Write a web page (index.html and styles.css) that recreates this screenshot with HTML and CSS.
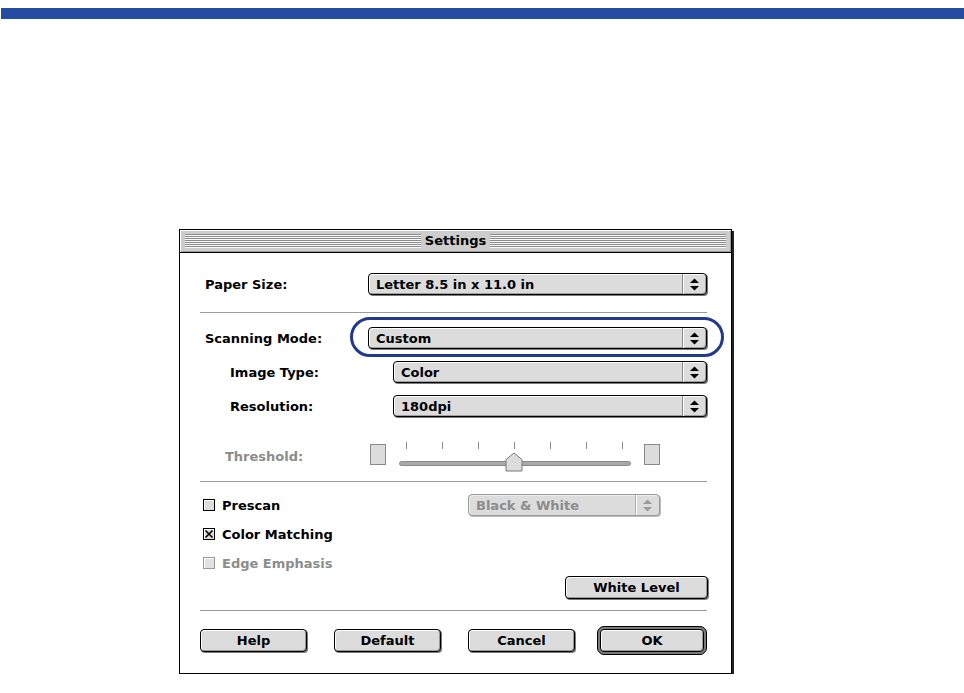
FILE: index.html
```html
<!DOCTYPE html>
<html lang="en">
<head>
    <meta charset="UTF-8">
    <title>Settings</title>
    <link rel="stylesheet" href="styles.css">
</head>
<body>
    <div class="topbar"></div>

    <div class="dialog">
        <div class="titlebar">
            <span class="grip"></span>
            <span class="title">Settings</span>
            <span class="grip"></span>
        </div>

        <div class="content">
            <div class="row">
                <span class="lbl">Paper Size:</span>
                <div class="popup">
                    <span class="value">Letter 8.5 in x 11.0 in</span>
                    <span class="arrows"><svg width="9" height="13" viewBox="0 0 9 13"><polygon points="0,5 4.5,0.5 9,5"/><polygon points="0,8 4.5,12.5 9,8"/></svg></span>
                </div>
            </div>

            <div class="sep"></div>

            <div class="row mode">
                <span class="lbl">Scanning Mode:</span>
                <div class="popup">
                    <span class="value">Custom</span>
                    <span class="arrows"><svg width="9" height="13" viewBox="0 0 9 13"><polygon points="0,5 4.5,0.5 9,5"/><polygon points="0,8 4.5,12.5 9,8"/></svg></span>
                    <span class="ring"></span>
                </div>
            </div>

            <div class="row sub">
                <span class="lbl">Image Type:</span>
                <div class="popup">
                    <span class="value">Color</span>
                    <span class="arrows"><svg width="9" height="13" viewBox="0 0 9 13"><polygon points="0,5 4.5,0.5 9,5"/><polygon points="0,8 4.5,12.5 9,8"/></svg></span>
                </div>
            </div>

            <div class="row sub">
                <span class="lbl">Resolution:</span>
                <div class="popup">
                    <span class="value">180dpi</span>
                    <span class="arrows"><svg width="9" height="13" viewBox="0 0 9 13"><polygon points="0,5 4.5,0.5 9,5"/><polygon points="0,8 4.5,12.5 9,8"/></svg></span>
                </div>
            </div>

            <div class="row thresh">
                <span class="lbl">Threshold:</span>
                <span class="sq"></span>
                <div class="track-area">
                    <div class="ticks">
                        <i></i><i></i><i></i><i></i><i></i><i></i><i></i>
                    </div>
                    <div class="track"></div>
                    <svg class="thumb" width="18" height="20" viewBox="0 0 18 20"><polygon points="1,19 1,7.5 9,1 17,7.5 17,19" fill="#dcdcdc" stroke="#7a7a7a" stroke-width="1"/></svg>
                </div>
                <span class="sq"></span>
            </div>

            <div class="sep sep2"></div>

            <div class="row check first">
                <span class="box"></span>
                <span class="clabel">Prescan</span>
                <div class="popup off bw">
                    <span class="value">Black &amp; White</span>
                    <span class="arrows"><svg width="9" height="13" viewBox="0 0 9 13"><polygon points="0,5 4.5,0.5 9,5"/><polygon points="0,8 4.5,12.5 9,8"/></svg></span>
                </div>
            </div>

            <div class="row check">
                <span class="box"><svg width="10" height="10" viewBox="0 0 10 10"><path d="M1.5 1.5 L8.5 8.5 M8.5 1.5 L1.5 8.5" stroke="#000" stroke-width="1.6"/></svg></span>
                <span class="clabel">Color Matching</span>
            </div>

            <div class="row check off">
                <span class="box"></span>
                <span class="clabel">Edge Emphasis</span>
            </div>

            <div class="row level">
                <span class="btn wide">White Level</span>
            </div>

            <div class="sep sep3"></div>

            <div class="buttons">
                <span class="btn">Help</span>
                <span class="btn">Default</span>
                <span class="btn">Cancel</span>
                <span class="default-ring"><span class="btn ok">OK</span></span>
            </div>
        </div>
    </div>
</body>
</html>
```

FILE: styles.css
```css
body {
    margin: 0;
    background: #fff;
    font-family: "DejaVu Sans", "Liberation Sans", sans-serif;
    font-weight: bold;
    font-size: 13px;
    color: #000;
}
.topbar {
    height: 11px;
    margin: 8px 0 0 1px;
    background-color: #244ca2;
}
.dialog {
    width: 553px;
    margin: 210px 0 0 179px;
    box-sizing: border-box;
    border: 1px solid #000;
    box-shadow: 2px 2px 0 #222;
    background: #fff;
}
.titlebar {
    height: 22px;
    display: flex;
    align-items: center;
    gap: 4px;
    padding: 0 5px 0 5px;
    background: #cdcdcd;
    border-bottom: 1px solid #000;
    box-shadow: inset 1px 1px 0 #fff, inset -1px -1px 0 #999;
}
.grip {
    flex: 1;
    height: 14px;
    background: repeating-linear-gradient(to bottom, #8a8a8a 0, #8a8a8a 1px, #fafafa 1px, #fafafa 2px);
}
.title {
    line-height: 22px;
}
.content {
    padding: 20px 24px 18px 0;
}
.row {
    display: flex;
    align-items: center;
    height: 22px;
    padding-left: 25px;
}
.row .lbl {
    width: 163px;
    flex: none;
}
.row.mode {
    margin-top: 14px;
}
.row.sub {
    padding-left: 50px;
    margin-top: 12px;
}
.popup {
    position: relative;
    flex: 1;
    display: flex;
    height: 22px;
    box-sizing: border-box;
    border: 1px solid #000;
    border-radius: 4px;
    background: #dcdcdc;
    box-shadow: inset 1px 1px 0 #fff, inset -1px -1px 0 #a0a0a0, 1px 1px 0 #7a7a7a;
}
.popup .value {
    flex: 1;
    padding-left: 7px;
    line-height: 21px;
    white-space: nowrap;
}
.popup .arrows {
    width: 23px;
    display: flex;
    align-items: center;
    justify-content: center;
    border-left: 1px solid #8a8a8a;
    box-shadow: inset 1px 0 0 #fff;
}
.popup .arrows svg {
    fill: #000;
}
.ring {
    position: absolute;
    left: -19px;
    top: -11px;
    right: -18px;
    bottom: -9px;
    border: 3px solid #22398e;
    border-radius: 22px;
}
.popup.off {
    border-color: #9a9a9a;
    color: #8c8c8c;
    box-shadow: inset 1px 1px 0 #eee, 1px 1px 0 #bbb;
}
.popup.off .arrows {
    border-left-color: #b0b0b0;
}
.popup.off .arrows svg {
    fill: #9a9a9a;
}
.popup.bw {
    flex: none;
    width: 192px;
    margin-left: auto;
    margin-right: 47px;
}
.sep {
    height: 1px;
    margin: 17px 0 0 20px;
    background: #9c9c9c;
}
.sep2 {
    margin-top: 9px;
}
.sep3 {
    margin-top: 12px;
}
.row.thresh {
    height: 30px;
    margin-top: 25px;
    padding-left: 45px;
    align-items: flex-start;
}
.row.thresh .lbl {
    width: 145px;
    color: #8c8c8c;
    line-height: 30px;
}
.sq {
    width: 16px;
    height: 21px;
    margin-top: 2px;
    box-sizing: border-box;
    border: 1px solid #8a8a8a;
    background: #dcdcdc;
}
.track-area {
    position: relative;
    width: 232px;
    height: 30px;
    margin: 0 13px;
}
.ticks {
    display: flex;
    justify-content: space-between;
    padding: 0 8px 0 7px;
}
.ticks i {
    width: 1px;
    height: 7px;
    background: #8a8a8a;
}
.track {
    height: 5px;
    margin-top: 12px;
    border-radius: 3px;
    background: #a8a8a8;
    border: 1px solid #8a8a8a;
    box-sizing: border-box;
}
.thumb {
    position: absolute;
    left: 106px;
    top: 10px;
}
.row.check {
    padding-left: 23px;
    margin-top: 7px;
}
.row.check.first {
    margin-top: 12px;
}
.box {
    width: 12px;
    height: 12px;
    box-sizing: border-box;
    border: 1px solid #000;
    background: #dcdcdc;
    box-shadow: inset 1px 1px 0 #fff;
    margin-right: 7px;
    display: flex;
    align-items: center;
    justify-content: center;
}
.row.check.off {
    color: #8c8c8c;
}
.row.check.off .box {
    border-color: #9a9a9a;
    background: #e2e2e2;
}
.row.level {
    margin-top: 2px;
    justify-content: flex-end;
    margin-right: -1px;
}
.btn {
    display: inline-block;
    width: 107px;
    height: 23px;
    line-height: 21px;
    box-sizing: border-box;
    text-align: center;
    border: 1px solid #000;
    border-radius: 4px;
    background: #dcdcdc;
    box-shadow: inset 1px 1px 0 #fff, inset -1px -1px 0 #9a9a9a, 1px 1px 0 #7a7a7a;
}
.btn.wide {
    width: 143px;
}
.buttons {
    display: flex;
    align-items: center;
    gap: 27px;
    height: 29px;
    margin-top: 15px;
    padding-left: 20px;
}
.default-ring {
    display: flex;
    margin-left: -5px;
    padding: 2px;
    border: 1px solid #000;
    border-radius: 7px;
    background: #7c7c7c;
}
.btn.ok {
    width: 104px;
}
```
